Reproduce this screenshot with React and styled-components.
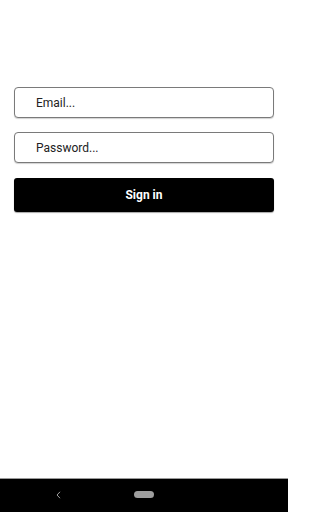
import React from "react";
import styled, { createGlobalStyle } from "styled-components";

const Global = createGlobalStyle`
  html, body { margin: 0; padding: 0; background: #fff; }
  body { font-family: Roboto, "Noto Sans", sans-serif; }
  #root { height: 512px; }
  * { box-sizing: border-box; }
`;

const Screen = styled.div`
  width: 288px;
  height: 512px;
  display: flex;
  flex-direction: column;
  background: #fff;
`;

const Content = styled.div`
  flex: 1;
  padding: 87px 14px 0;
  display: flex;
  flex-direction: column;
`;

const Form = styled.form`
  display: flex;
  flex-direction: column;
  margin: 0;
`;

const Input = styled.input`
  height: 31px;
  width: 100%;
  border: 1px solid #7a7a7a;
  border-radius: 4px;
  padding: 0 0 0 21px;
  margin-bottom: ${(p) => p.$gap}px;
  font-family: Roboto, sans-serif;
  font-size: 12px;
  color: #222;
  background: #fff;
  box-shadow: 0 1px 1px rgba(0, 0, 0, 0.18);
  outline: none;
  &::placeholder { color: #222; }
`;

const Button = styled.button`
  height: 34px;
  width: 100%;
  border: none;
  border-radius: 3px;
  background: #000;
  color: #fff;
  font-family: Roboto, sans-serif;
  font-weight: 700;
  font-size: 12px;
  box-shadow: 0 1px 1px rgba(0, 0, 0, 0.35);
  cursor: pointer;
`;

const NavBar = styled.div`
  height: 34px;
  background: #000;
  border-top: 1px solid #9a9a9a;
  position: relative;
  display: flex;
  align-items: center;
`;

const Back = styled.svg`
  position: absolute;
  left: 56px;
  top: 12px;
`;

const Pill = styled.div`
  position: absolute;
  left: 134px;
  top: 12px;
  width: 20px;
  height: 7px;
  border-radius: 4px;
  background: #9e9e9e;
`;

export default function App() {
  return (
    <>
      <Global />
      <Screen>
        <Content>
          <Form onSubmit={(e) => e.preventDefault()}>
            <Input $gap={14} placeholder="Email..." />
            <Input $gap={15} type="password" placeholder="Password..." />
            <Button type="submit">Sign in</Button>
          </Form>
        </Content>
        <NavBar>
          <Back width="5" height="8" viewBox="0 0 5 8">
            <path d="M4 0.8 L1 4 L4 7.2" fill="none" stroke="#a0a0a0" strokeWidth="1" />
          </Back>
          <Pill />
        </NavBar>
      </Screen>
    </>
  );
}
